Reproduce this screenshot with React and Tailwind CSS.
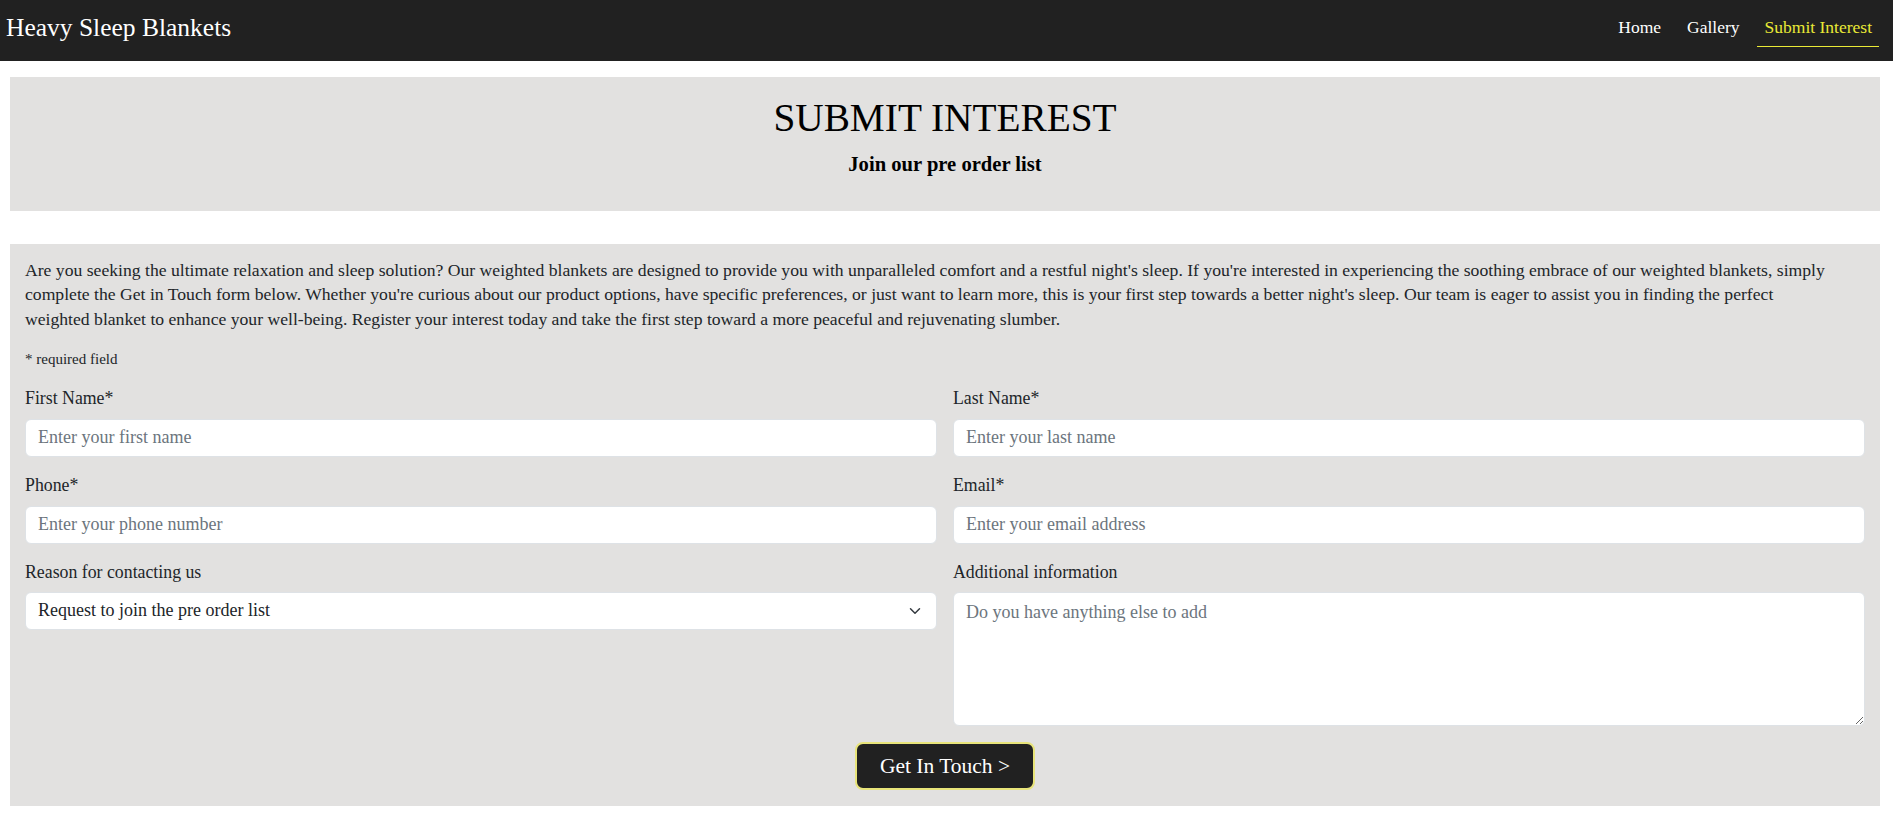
import React from "react";

const serif = { fontFamily: '"Liberation Serif", "DejaVu Serif", serif' };

function Field({ label, placeholder }) {
  return (
    <div className="flex flex-col">
      <label className="text-[17.8px] leading-[24px] text-[#212529] mb-[9px]">{label}</label>
      <input
        placeholder={placeholder}
        className="h-[38px] w-full rounded-[6px] border border-[#dee2e6] bg-white px-[12px] text-[18px] text-[#212529] placeholder:text-[#6c757d] outline-none"
        style={serif}
      />
    </div>
  );
}

export default function App() {
  return (
    <div className="min-h-screen bg-white" style={serif}>
      <nav className="flex h-[61px] items-start justify-between bg-[#212121] pl-[6px] pr-[14px]">
        <a className="mt-[14px] text-[25.5px] leading-[28px] text-white">Heavy Sleep Blankets</a>
        <ul className="flex items-start text-[17.5px] leading-[24px]">
          <li className="px-[7px] mx-[6px] pt-[15px] text-white">Home</li>
          <li className="px-[7px] mx-[6px] pt-[15px] text-white">Gallery</li>
          <li className="pl-[8px] pr-[7px] ml-[4px] pt-[15px] pb-[7px] text-[#eaea36] border-b border-[#eaea36]">Submit Interest</li>
        </ul>
      </nav>

      <header className="ml-[10px] mr-[13px] mt-[16px] flex h-[134px] flex-col items-center bg-[#e2e1e0] pt-[17px]">
        <h1 className="text-[39.3px] leading-[48px] text-black">SUBMIT INTEREST</h1>
        <h2 className="mt-[8px] text-[20.6px] font-semibold leading-[28px] text-black">Join our pre order list</h2>
      </header>

      <section className="ml-[10px] mr-[13px] mt-[33px] bg-[#e2e1e0] px-[15px] pt-[14px] pb-[16px]">
        <p className="pr-[28px] text-[17.65px] leading-[24.3px] text-[#212529]">
          Are you seeking the ultimate relaxation and sleep solution? Our weighted blankets are designed to provide you with unparalleled comfort and a restful night's sleep. If you're interested in experiencing the soothing embrace of our weighted blankets, simply complete the Get in Touch form below. Whether you're curious about our product options, have specific preferences, or just want to learn more, this is your first step towards a better night's sleep. Our team is eager to assist you in finding the perfect weighted blanket to enhance your well-being. Register your interest today and take the first step toward a more peaceful and rejuvenating slumber.
        </p>
        <p className="mt-[18px] text-[15px] leading-[20px] text-[#212529]">* required field</p>

        <div className="mt-[17px] grid grid-cols-2 gap-x-[16px] gap-y-[16px]">
          <Field label="First Name*" placeholder="Enter your first name" />
          <Field label="Last Name*" placeholder="Enter your last name" />
          <Field label="Phone*" placeholder="Enter your phone number" />
          <Field label="Email*" placeholder="Enter your email address" />
          <div className="flex flex-col">
            <label className="text-[17.8px] leading-[24px] text-[#212529] mb-[8px]">Reason for contacting us</label>
            <div className="relative">
              <select
                className="h-[38px] w-full appearance-none rounded-[6px] border border-[#dee2e6] bg-white px-[12px] text-[18px] text-[#212529] outline-none"
                style={serif}
                defaultValue="a"
              >
                <option value="a">Request to join the pre order list</option>
              </select>
              <svg className="pointer-events-none absolute right-[16px] top-[13px]" width="12" height="12" viewBox="0 0 16 16">
                <path d="M2 5l6 6 6-6" fill="none" stroke="#343a40" strokeWidth="2" strokeLinecap="round" strokeLinejoin="round" />
              </svg>
            </div>
          </div>
          <div className="flex flex-col">
            <label className="text-[17.8px] leading-[24px] text-[#212529] mb-[8px]">Additional information</label>
            <textarea
              placeholder="Do you have anything else to add"
              className="h-[134px] w-full rounded-[6px] border border-[#dee2e6] bg-white px-[12px] py-[6px] text-[18px] text-[#212529] placeholder:text-[#6c757d] outline-none"
              style={serif}
            />
          </div>
        </div>

        <div className="mt-[16px] flex justify-center">
          <button
            className="h-[48px] w-[180px] rounded-[8px] border-2 border-[#e8e47a] bg-[#212121] text-[21.5px] text-white"
            style={serif}
          >
            Get In Touch &gt;
          </button>
        </div>
      </section>
    </div>
  );
}
